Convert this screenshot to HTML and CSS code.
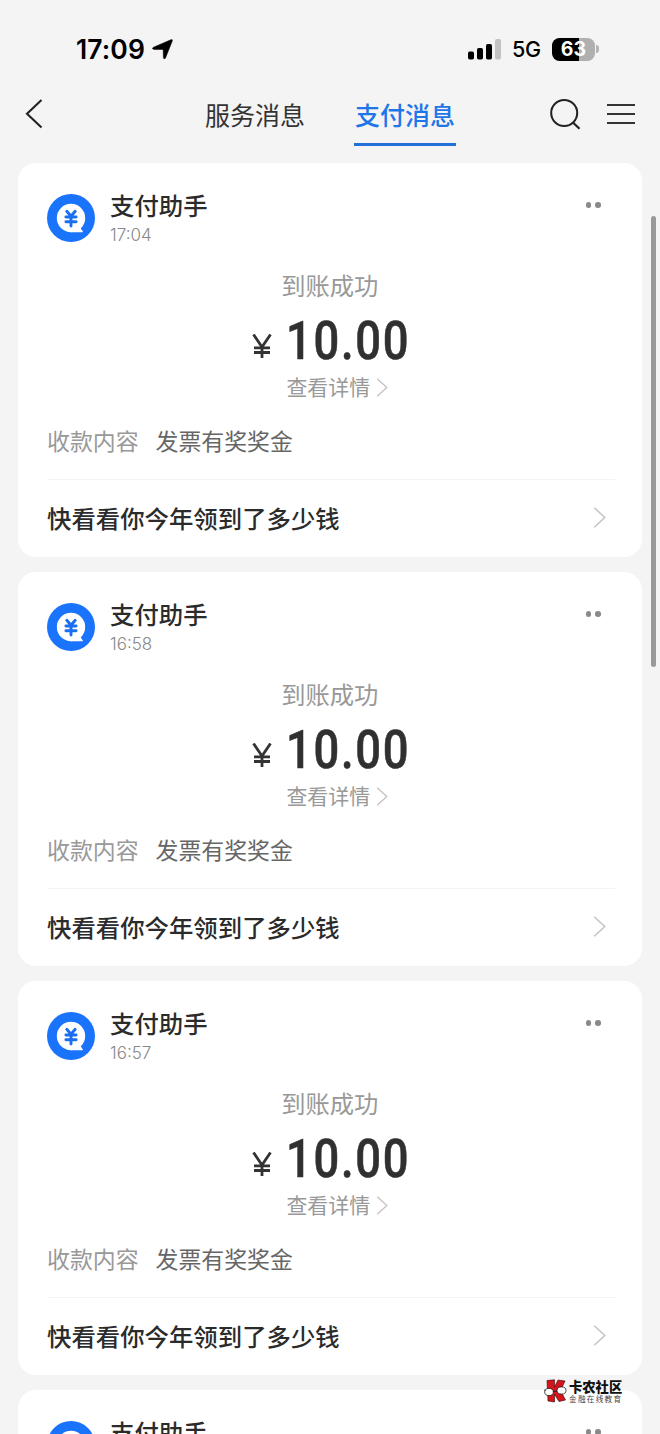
FILE: index.html
```html
<!DOCTYPE html>
<html lang="zh-CN">
<head>
<meta charset="utf-8">
<title>支付消息</title>
<link rel="stylesheet" href="styles.css">
</head>
<body>
<svg class="defs" width="0" height="0">
  <symbol id="avatar" viewBox="0 0 48 48">
    <circle cx="24" cy="24" r="24" fill="#1a73fb"/>
    <circle cx="24" cy="24" r="14.200" fill="#fff"/>
    <path fill="#fff" d="M24 38.200H35.500Q36.600 37.500 35.300 36.700L33.500 34L35 30L25 28Z"/>
    <path fill="none" stroke="#1a6ff0" stroke-width="2.900" stroke-linecap="round" d="M19.800 17.300L24 22.300L28.200 17.300M18.900 23H29.100M18.900 27.800H29.100M24 22V32"/>
  </symbol>
  <symbol id="chevron" viewBox="0 0 12 20">
    <path fill="none" stroke="currentColor" stroke-width="1.500" d="M1 .7L11 10L1 19.300"/>
  </symbol>
</svg>
<div class="screen">
  <header class="status">
    <span class="clock">17:09</span>
    <svg class="locate" width="21" height="21" viewBox="0 0 21 21"><path d="M18.800 .8Q21 0 20.200 2.200L13.600 18.800Q12.300 21.200 11.400 18.800L11.200 11.300Q11 10.600 10.300 10.500L1.800 10.400Q-1 9.500 1.600 8.200Z" fill="#000" stroke="#000" stroke-width=".5"/></svg>
    <svg class="signal" width="33" height="21" viewBox="0 0 33 21"><rect y="12.500" width="6" height="8" rx="1.700"/><rect x="9" y="9" width="6" height="11.500" rx="1.700"/><rect x="18" y="5" width="6" height="15.500" rx="1.700"/><rect x="27" y="0" width="6" height="20.500" rx="1.700" fill="#c3c3c3"/></svg>
    <span class="network">5G</span>
    <span class="battery">63</span><span class="cap"></span>
  </header>
  <nav class="nav">
    <svg class="back" width="18" height="30" viewBox="0 0 18 30"><path d="M16.500 1L2 14.800L16.500 28.500" fill="none" stroke="#222" stroke-width="2.100"/></svg>
    <span class="tab">服务消息</span>
    <span class="tab active">支付消息</span>
    <svg class="search" width="31" height="31" viewBox="0 0 31 31"><path d="M22.700 23.300L29.500 29.800" fill="none" stroke="#222" stroke-width="2.200"/><circle cx="14.200" cy="14" r="13" fill="none" stroke="#222" stroke-width="2"/></svg>
    <svg class="menu" width="28" height="22" viewBox="0 0 28 22"><path d="M0 2H28M0 11H28M0 20H28" stroke="#333" stroke-width="2"/></svg>
  </nav>
  <main class="list">
    <article class="card">
      <div class="head"><svg class="avatar"><use href="#avatar"/></svg><div class="who"><div class="name">支付助手</div><div class="time">17:04</div></div><div class="dots"><i></i><i></i></div></div>
      <div class="label">到账成功</div>
      <div class="amount"><svg class="yen" width="20" height="24" viewBox="0 0 20 24"><path d="M1.500 .5L10 13L18.500 .5M2 13.800H18M2 18.500H18M10 12V24"/></svg><span class="sum">10.00</span></div>
      <div class="detail">查看详情<svg class="go small"><use href="#chevron"/></svg></div>
      <div class="row"><span class="key">收款内容</span><span class="value">发票有奖奖金</span></div>
      <div class="promo">快看看你今年领到了多少钱<svg class="go"><use href="#chevron"/></svg></div>
    </article>
    <article class="card">
      <div class="head"><svg class="avatar"><use href="#avatar"/></svg><div class="who"><div class="name">支付助手</div><div class="time">16:58</div></div><div class="dots"><i></i><i></i></div></div>
      <div class="label">到账成功</div>
      <div class="amount"><svg class="yen" width="20" height="24" viewBox="0 0 20 24"><path d="M1.500 .5L10 13L18.500 .5M2 13.800H18M2 18.500H18M10 12V24"/></svg><span class="sum">10.00</span></div>
      <div class="detail">查看详情<svg class="go small"><use href="#chevron"/></svg></div>
      <div class="row"><span class="key">收款内容</span><span class="value">发票有奖奖金</span></div>
      <div class="promo">快看看你今年领到了多少钱<svg class="go"><use href="#chevron"/></svg></div>
    </article>
    <article class="card">
      <div class="head"><svg class="avatar"><use href="#avatar"/></svg><div class="who"><div class="name">支付助手</div><div class="time">16:57</div></div><div class="dots"><i></i><i></i></div></div>
      <div class="label">到账成功</div>
      <div class="amount"><svg class="yen" width="20" height="24" viewBox="0 0 20 24"><path d="M1.500 .5L10 13L18.500 .5M2 13.800H18M2 18.500H18M10 12V24"/></svg><span class="sum">10.00</span></div>
      <div class="detail">查看详情<svg class="go small"><use href="#chevron"/></svg></div>
      <div class="row"><span class="key">收款内容</span><span class="value">发票有奖奖金</span></div>
      <div class="promo">快看看你今年领到了多少钱<svg class="go"><use href="#chevron"/></svg></div>
    </article>
    <article class="card">
      <div class="head"><svg class="avatar"><use href="#avatar"/></svg><div class="who"><div class="name">支付助手</div></div><div class="dots"><i></i><i></i></div></div>
    </article>
  </main>
  <div class="scrollbar"></div>
  <div class="watermark">
    <svg width="23" height="24" viewBox="0 0 23 24"><path d="M3 1.500L10.500 .8V8L14 1L21 2L16.500 11.500L21.500 21L15 22.500L10.500 15.500V23L4 22Z" fill="#d4151c" stroke="#300" stroke-width=".6"/><ellipse cx="5" cy="13" rx="4.300" ry="3.600" fill="#fff" stroke="#222" stroke-width=".8"/><ellipse cx="17.500" cy="11.500" rx="4.500" ry="3.600" fill="#fff" stroke="#222" stroke-width=".8"/><path d="M9.300 12.500L13 12M0 10.500L1.500 12" stroke="#222"/></svg>
    <div class="brand"><div class="brand-name">卡农社区</div><div class="brand-sub">金融在线教育</div></div>
  </div>
</div>
</body>
</html>
```
FILE: styles.css
```css
* { box-sizing: border-box; }
body { margin: 0; background: #f4f4f4; font-family: "Noto Sans CJK SC", sans-serif; color: #2b2b2b; }
.defs { position: absolute; }
.screen { position: relative; width: 660px; height: 1434px; overflow: hidden; }
svg { display: block; flex: none; }

.status { display: flex; align-items: center; height: 82px; padding: 16px 61px 0 76px; font-family: Inter, sans-serif; color: #000; }
.clock { width: 70px; font-size: 26.5px; font-weight: 600; line-height: 30px; letter-spacing: .1px; white-space: nowrap; }
.locate { margin-left: 6px; }
.signal { margin-left: 295px; }
.network { margin-left: 11px; width: 40px; font-size: 21.5px; font-weight: 500; line-height: 30px; letter-spacing: -.2px; }
.battery { width: 43px; height: 23px; border-radius: 7.500px; background: linear-gradient(90deg, #000 63%, #b0b0b0 63%); color: #fff; font-size: 19.500px; font-weight: 700; line-height: 23px; text-align: center; }
.cap { width: 3px; height: 8px; margin-left: 1px; border-radius: 0 3px 3px 0; background: #b5b5b5; }

.nav { display: flex; align-items: center; height: 64px; padding-left: 25px; }
.back { margin-right: 161px; }
.tab { width: 102px; height: 64px; padding-top: 13px; margin-right: 48px; font-size: 25px; line-height: 38px; text-align: center; white-space: nowrap; color: #333; }
.tab.active { border-bottom: 3px solid #2271d8; color: #1f76e8; font-weight: 500; }
.active + .search { margin-left: 46px; }
.nav .menu { margin-left: 26px; }

.list { display: flex; flex-direction: column; gap: 15.500px; padding: 17px 18.500px 0 18px; }
.card { height: 393.500px; flex: none; padding: 30px 27px 0 29px; border-radius: 18px; background: #fff; }
.head { display: flex; height: 49px; }
.avatar { width: 48px; height: 48px; margin-top: .5px; }
.who { margin-left: 15px; }
.name { height: 30px; margin-top: -5px; font-size: 24.400px; font-weight: 500; line-height: 34px; }
.time { height: 22px; margin-top: 6px; font-family: Inter, sans-serif; font-size: 17px; font-weight: 300; line-height: 22px; color: #888; }
.dots { display: flex; gap: 4px; margin: 9px 14px 0 auto; }
.dots i { width: 5.500px; height: 5.500px; border-radius: 50%; background: #8a8a8a; }
.label { height: 34px; margin-top: 26px; padding-right: 2px; font-size: 24.300px; line-height: 34px; text-align: center; color: #999; }
.amount { display: flex; height: 56px; padding-left: 205px; margin-top: 10px; }
.yen { margin-top: 22px; fill: none; stroke: #333; stroke-width: 2.800; }
.sum { height: 56px; margin: 1px 0 0 13.500px; font: 500 54px/56px Roboto, sans-serif; letter-spacing: 2px; color: #303030; -webkit-text-stroke: .6px #303030; transform: scaleX(.84); transform-origin: left; }
.detail { display: flex; justify-content: center; align-items: center; height: 30px; margin-top: 3px; padding-left: 13px; font-size: 20.900px; line-height: 30px; color: #999; }
.go { width: 13px; height: 21px; margin: 0 9px 0 auto; color: #c5c5c5; }
.go.small { width: 12px; height: 19px; margin: 2px 0 0 6px; }
.row { display: flex; height: 79px; padding-top: 22px; gap: 17px; border-bottom: 1px solid #f4f4f4; font-size: 22.900px; line-height: 34px; }
.key { color: #999; }
.value { color: #666; }
.promo { display: flex; align-items: center; height: 74px; font-size: 24.400px; font-weight: 500; }

.scrollbar { position: absolute; left: 650.500px; top: 216px; width: 5px; height: 451px; border-radius: 3px; background: #999; }
.watermark { position: absolute; left: 544px; top: 1379px; display: flex; gap: 2px; }
.brand-name { height: 15px; font-size: 13.300px; line-height: 15px; font-weight: 900; color: #111; }
.brand-sub { font-size: 7.600px; line-height: 9px; letter-spacing: 1.300px; color: #444; white-space: nowrap; }
```
